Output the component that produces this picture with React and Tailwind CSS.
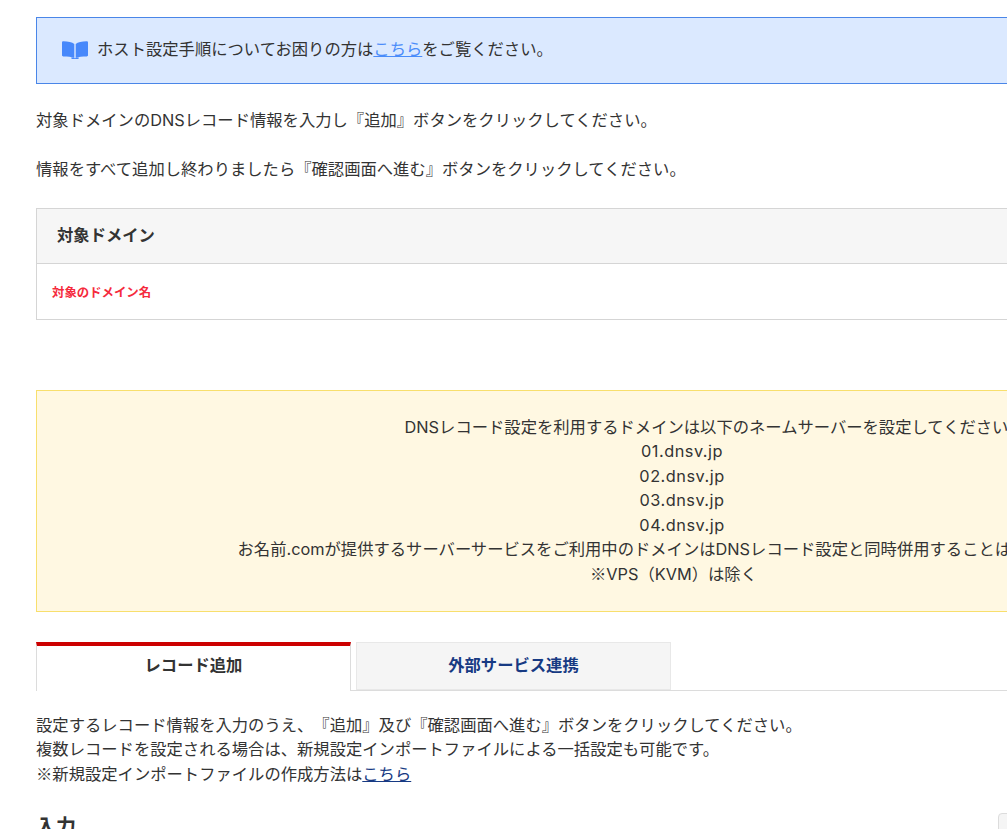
const Cjk = ({ children }) => <span className="font-['Noto_Sans_CJK_JP',sans-serif] leading-none">{children}</span>;

export default function App() {
  return (
    <div className="h-[829px] w-full overflow-hidden bg-white font-['Inter','Noto_Sans_CJK_JP',sans-serif] text-[16.32px] leading-[24.48px] text-[#333] [text-spacing-trim:space-all]">
      <div className="ml-9 w-[1292px] pt-[17px]">
        <div className="flex h-[67px] items-center gap-[9px] border border-[#4a86e8] bg-[#dbe9ff] pb-[2px] pl-[25px]">
          <svg viewBox="0 0 26 18" className="h-[18px] w-[26px] text-[#4788fb]" fill="currentColor">
            <path d="M12.300 3C10.300 1.200 6 .300 1.300.300.600.300 0 .800 0 1.500V14.300c0 .7.600 1.200 1.300 1.200 4.300 0 8.200.3 11 1.500z" />
            <path d="M13.700 3C15.700 1.200 20 .300 24.700.300c.7 0 1.300.500 1.300 1.200V14.300c0 .7-.6 1.200-1.300 1.200-4.300 0-8.200.3-11 1.500z" />
            <path d="M9.500 16.200 13 17.200l3.500-1 .1 1.800H9.500z" />
          </svg>
          <p>
            ホスト設定手順についてお困りの方は
            <a className="text-[#4a8cfa] underline">こちら</a>
            をご覧ください。
          </p>
        </div>
        <p className="mt-[24px]">対象ドメインのDNSレコード情報を入力し『追加』ボタンをクリックしてください。</p>
        <p className="mt-[25px]">情報をすべて追加し終わりましたら『確認画面へ進む』ボタンをクリックしてください。</p>
        <div className="mt-[26px] border border-[#d5d5d5]">
          <div className="flex h-[55px] items-center border-b border-[#d5d5d5] bg-[#f6f6f6] pb-[2px] pl-5 font-bold">対象ドメイン</div>
          <div className="flex h-[55px] items-center pl-[15px] pt-[3px] text-[12.4px] font-bold text-[#f52a3c]">対象のドメイン名</div>
        </div>
        <div className="mt-[70px] flex h-[222px] flex-col justify-center border border-[#f8df6d] bg-[#fff8e2] pb-[1px] text-center">
          <p>　　　　DNSレコード設定を利用するドメインは以下のネームサーバーを設定してください。</p>
          <p className="tracking-[0.5px]">01.dnsv.jp</p>
          <p className="tracking-[0.5px]">02.dnsv.jp</p>
          <p className="tracking-[0.5px]">03.dnsv.jp</p>
          <p className="tracking-[0.5px]">04.dnsv.jp</p>
          <p className="pr-[18px]">お名前.comが提供するサーバーサービスをご利用中のドメインはDNSレコード設定と同時併用することはできません。</p>
          <p className="pr-[17px]"><Cjk>※</Cjk>VPS（KVM）は除く</p>
        </div>
        <div className="mt-[30px] flex h-[49px] gap-[5px] border-b border-[#dcdcdc]">
          <div className="z-10 flex h-[49px] w-[315px] items-center justify-center border-x border-t-4 border-x-[#dcdcdc] border-t-[#cc0000] bg-white pb-[6px] font-bold">レコード追加</div>
          <div className="flex h-[48px] w-[315px] items-center justify-center border border-[#e8e8e8] bg-[#f5f5f5] pb-[2px] font-bold text-[#173a83]">外部サービス連携</div>
        </div>
        <div className="mt-[22px]">
          <p>設定するレコード情報を入力のうえ、『追加』及び『確認画面へ進む』ボタンをクリックしてください。</p>
          <p>複数レコードを設定される場合は、新規設定インポートファイルによる一括設定も可能です。</p>
          <p><Cjk>※</Cjk>新規設定インポートファイルの作成方法は<a className="text-[#173a83] underline">こちら</a></p>
        </div>
        <div className="mt-[27px] flex items-start justify-between">
          <h2 className="mt-[2px] text-[20px] font-bold">入力</h2>
          <div className="mr-[290px] h-[30px] w-[40px] rounded-tl-sm border border-[#dcdcdc] bg-[#f5f5f5]"></div>
        </div>
      </div>
    </div>
  );
}
